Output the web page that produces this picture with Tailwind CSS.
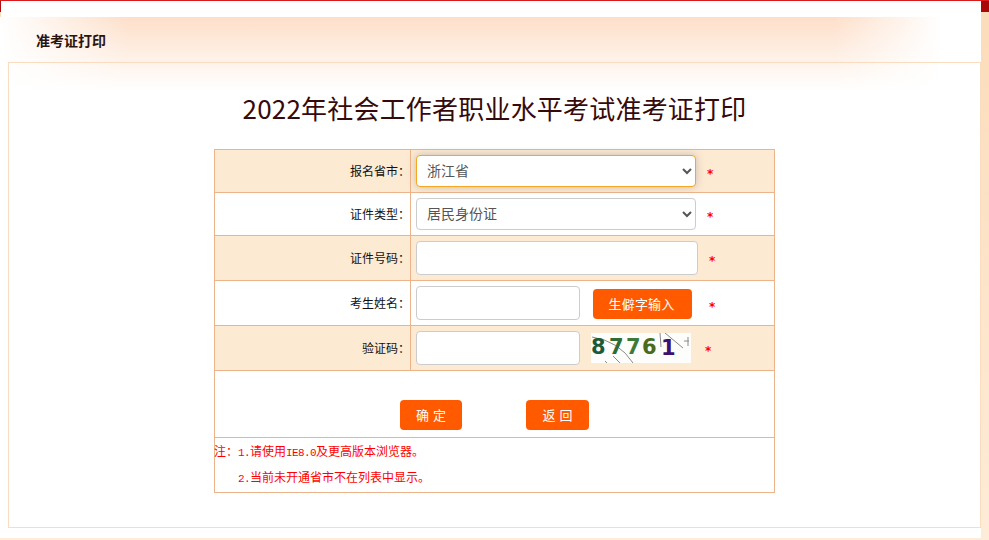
<!DOCTYPE html>
<html lang="zh-CN">
<head>
  <meta charset="UTF-8" />
  <title>准考证打印</title>
  <script src="https://cdn.jsdelivr.net/npm/@tailwindcss/browser@4"></script>
</head>
<body class="h-[540px] overflow-hidden bg-[#fdecd8] font-['Noto_Sans_CJK_SC','Liberation_Sans',sans-serif] text-xs text-[#111]">

  <!-- top bar -->
  <div class="h-px bg-[#d9191c]"></div>

  <div class="flex h-[539px]">
    <!-- left edge -->
    <div class="w-px flex-none">
      <div class="h-[11px] bg-[#b00f10]"></div>
      <div class="h-[5px] bg-[#fbdcb9]"></div>
      <div class="h-[521px] bg-white"></div>
    </div>

    <main class="h-[537px] w-[980px] flex-none bg-white pt-4">
      <div class="h-[511px] bg-[linear-gradient(to_right,#fff,rgba(255,255,255,0)_13%,rgba(255,255,255,0)_85%,#fff_96%),linear-gradient(to_bottom,#fddfc9,#fff_74px)]">
        <h2 class="h-[45px] pl-[35px] text-sm leading-[46px] font-bold text-[#2a1410]">准考证打印</h2>

        <section class="ml-[7px] h-[466px] w-[973px] border border-[#fadcc0] pt-[26px]">
          <h1 class="text-center text-[26px] leading-[38px] tracking-[0.2px] text-[#360a0a]">2022年社会工作者职业水平考试准考证打印</h1>

          <table class="mt-[22px] ml-[205px] w-[561px] table-fixed border-collapse">
            <colgroup>
              <col class="w-[196px]" />
              <col />
            </colgroup>
            <tbody>
              <tr class="h-[43px] bg-[#fdead3]">
                <td class="border border-[#edb48c] text-right">报名省市：</td>
                <td class="border border-[#edb48c] pl-[5px]">
                  <div class="flex items-center">
                    <select class="h-8 w-[280px] rounded border border-[#f5a623] bg-white pb-0.5 pl-1.5 text-sm text-[#555] shadow-[0_0_8px_rgba(100,100,100,0.35)]">
                      <option>浙江省</option>
                    </select>
                    <span class="ml-[11px] pt-[5px] font-['DejaVu_Sans'] text-[12px] font-bold text-[#f00]">*</span>
                  </div>
                </td>
              </tr>
              <tr class="h-[43px] bg-white">
                <td class="border border-[#edb48c] text-right">证件类型：</td>
                <td class="border border-[#edb48c] pl-[5px]">
                  <div class="flex items-center">
                    <select class="h-8 w-[280px] rounded border border-[#ccc] bg-white pb-0.5 pl-1.5 text-sm text-[#555]">
                      <option>居民身份证</option>
                    </select>
                    <span class="ml-[11px] pt-[5px] font-['DejaVu_Sans'] text-[12px] font-bold text-[#f00]">*</span>
                  </div>
                </td>
              </tr>
              <tr class="h-[45px] bg-[#fdead3]">
                <td class="border border-[#edb48c] text-right">证件号码：</td>
                <td class="border border-[#edb48c] pl-[5px]">
                  <div class="flex items-center">
                    <input type="text" class="h-[34px] w-[282px] rounded border border-[#ccc] bg-white" />
                    <span class="ml-[11px] pt-[5px] font-['DejaVu_Sans'] text-[12px] font-bold text-[#f00]">*</span>
                  </div>
                </td>
              </tr>
              <tr class="h-[45px] bg-white">
                <td class="border border-[#edb48c] text-right">考生姓名：</td>
                <td class="border border-[#edb48c] pl-[5px]">
                  <div class="flex items-center">
                    <input type="text" class="h-[34px] w-[164px] rounded border border-[#ccc] bg-white" />
                    <button class="mt-0.5 ml-[13px] h-[30px] w-[99px] rounded-sm bg-[#ff5a00] pr-0.5 text-[13px] tracking-[0.2px] text-white">生僻字输入</button>
                    <span class="ml-[17px] pt-[7px] font-['DejaVu_Sans'] text-[12px] font-bold text-[#f00]">*</span>
                  </div>
                </td>
              </tr>
              <tr class="h-[45px] bg-[#fdead3]">
                <td class="border border-[#edb48c] text-right">验证码：</td>
                <td class="border border-[#edb48c] pl-[5px]">
                  <div class="flex items-center">
                    <input type="text" class="h-[34px] w-[164px] rounded border border-[#ccc] bg-white" />
                    <svg class="ml-[11px] h-[30px] w-[100px]" viewBox="0 0 100 30">
                      <rect width="100" height="30" fill="#fdfdfb" />
                      <g fill="none" stroke="#8a8a8a" stroke-width="1">
                        <path d="M1 4 Q28 8 42 30" />
                        <path d="M22 23 L29 30" />
                        <path d="M69 0 L70 14" />
                        <path d="M74 0 L92 15" />
                        <path d="M97 4 L97 13 M93 8 L98 8" />
                        <path d="M14 28 L16 30" />
                      </g>
                      <g font-family="'DejaVu Sans',sans-serif" font-size="21" font-weight="bold">
                        <text x="0" y="21" fill="#1d5a36">8</text>
                        <text x="18" y="21" fill="#2f6b35">7</text>
                        <text x="35" y="21" fill="#3d7a3a">7</text>
                        <text x="51" y="21" fill="#4a6a1c">6</text>
                        <text x="70" y="22" fill="#3d0f70">1</text>
                      </g>
                    </svg>
                    <span class="ml-[14px] pt-[5px] font-['DejaVu_Sans'] text-[12px] font-bold text-[#f00]">*</span>
                  </div>
                </td>
              </tr>
              <tr class="h-[67px] bg-white">
                <td colspan="2" class="border border-[#edb48c] pt-[29px] align-top">
                  <div class="flex pl-[185px]">
                    <button class="h-[30px] w-[62px] rounded-sm bg-[#ff5a00] pl-1 text-[13px] tracking-[4px] text-white">确定</button>
                    <button class="ml-16 h-[30px] w-[63px] rounded-sm bg-[#ff5a00] pl-1 text-[13px] tracking-[4px] text-white">返回</button>
                  </div>
                </td>
              </tr>
              <tr class="h-[55px] bg-white">
                <td colspan="2" class="border border-[#edb48c] pb-0.5 text-[#f00]">
                  <p class="-ml-px h-[26px] leading-[26px]">注：<span class="font-['Liberation_Mono'] text-[11px] leading-none tracking-[-0.6px]">1.</span>请使用<span class="font-['Liberation_Mono'] text-[11px] leading-none tracking-[-0.6px]">IE8.0</span>及更高版本浏览器。</p>
                  <p class="h-[26px] pl-[23px] leading-[26px]"><span class="font-['Liberation_Mono'] text-[11px] leading-none tracking-[-0.6px]">2.</span>当前未开通省市不在列表中显示。</p>
                </td>
              </tr>
            </tbody>
          </table>
        </section>
      </div>
    </main>

    <!-- right edge -->
    <div class="flex-1 bg-[linear-gradient(to_bottom,#fbdcb9,#fdecd8)]">
      <div class="h-[11px] bg-[#a80808]"></div>
    </div>
  </div>
</body>
</html>
